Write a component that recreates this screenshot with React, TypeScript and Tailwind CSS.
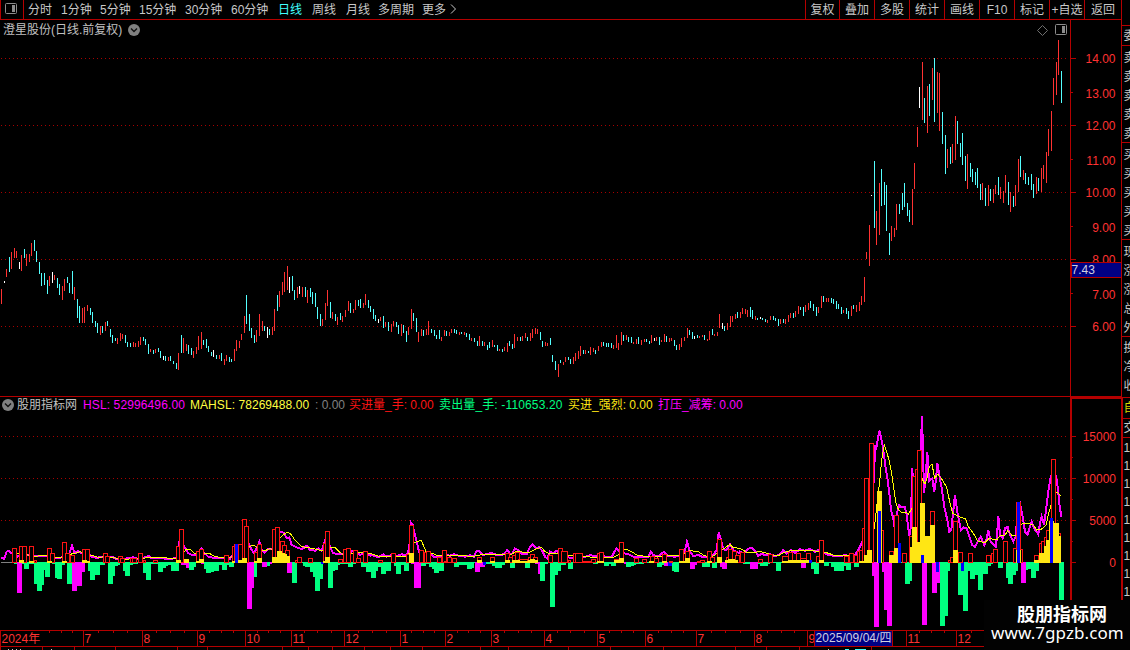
import type { ReactNode } from "react";

const FONT = "font-['Liberation_Sans','Noto_Sans_CJK_SC',sans-serif]";

const periods = [
  { label: "分时", width: "w-[33px]" },
  { label: "1分钟", width: "w-[39px]" },
  { label: "5分钟", width: "w-[39px]" },
  { label: "15分钟", width: "w-[46px]" },
  { label: "30分钟", width: "w-[46px]" },
  { label: "60分钟", width: "w-[47px]" },
  { label: "日线", width: "w-[34px]", active: true },
  { label: "周线", width: "w-[34px]" },
  { label: "月线", width: "w-[32px]" },
  { label: "多周期", width: "w-[44px]" },
  { label: "更多", width: "w-[28px]" },
];

const actions = ["复权", "叠加", "多股", "统计", "画线", "F10", "标记", "+自选", "返回"];

const legend = [
  { label: "股朋指标网", style: "w-[66px] text-[#c0c0c0]" },
  { label: "HSL: 52996496.00", style: "w-[107px] text-[#ff00ff] tracking-[0.12px]" },
  { label: "MAHSL: 78269488.00", style: "w-[125px] text-[#ffff40] tracking-[0.06px]" },
  { label: ": 0.00", style: "w-[34px] text-[#808080]" },
  { label: "买进量_手: 0.00", style: "w-[90px] text-[#ff1414]" },
  { label: "卖出量_手: -110653.20", style: "w-[129px] text-[#00ff80] tracking-[0.14px]" },
  { label: "买进_强烈: 0.00", style: "w-[90px] text-[#ffe614]" },
  { label: "打压_减筹: 0.00", style: "w-[90px] text-[#ff00ff]" },
];

// x, high, low, colour
const candles = `1 289 304 r,4 281 283 w,6 269 277 r,9 257 272 c,11 252 269 r,14 248 258 r,16 251 258 r,19 262 269 w,21 255 271 r,24 249 258 c,26 254 266 r,29 254 262 r,31 243 256 r,34 240 251 c,36 251 262 c,39 262 274 c,41 273 286 c,44 273 285 c,47 280 294 c,49 276 286 r,52 272 283 w,54 275 280 r,57 278 288 c,59 284 295 c,62 286 300 r,64 279 291 r,67 277 283 c,69 283 293 c,72 271 294 c,74 287 300 r,77 299 318 c,79 306 323 c,82 308 323 r,84 307 323 r,87 305 311 r,90 308 315 c,92 312 323 c,95 321 327 c,97 323 333 c,100 326 335 r,102 326 333 c,105 322 331 r,107 321 326 c,110 329 337 c,112 335 343 c,115 338 341 c,117 338 344 r,120 333 341 r,122 334 339 r,125 335 343 c,127 342 347 c,130 343 347 c,133 342 347 r,135 343 347 r,138 341 347 r,140 337 345 r,143 337 341 c,145 339 345 c,148 344 354 c,150 349 352 r,153 350 354 c,155 349 353 r,158 348 352 c,160 351 358 c,163 356 360 w,165 356 361 c,168 357 361 r,170 356 361 c,173 361 364 c,176 363 369 c,178 353 370 r,181 335 353 c,183 338 353 r,186 344 351 r,188 345 354 c,191 348 355 c,193 351 358 r,196 347 354 r,198 336 350 r,201 332 349 r,203 340 345 c,206 339 348 c,208 346 352 c,211 352 356 c,213 350 357 w,216 355 359 c,219 355 359 r,221 353 361 c,224 359 365 r,226 355 361 r,229 357 362 c,231 359 362 c,234 349 361 r,236 340 351 r,239 341 348 r,241 334 340 r,244 316 333 r,246 295 324 c,249 314 331 c,251 328 338 c,254 335 343 c,256 330 342 r,259 314 336 r,262 321 331 r,264 326 331 c,267 327 338 w,269 329 335 c,272 327 335 r,274 309 331 r,277 295 311 c,279 291 307 r,282 282 295 r,284 272 292 r,287 266 290 r,289 277 293 w,292 276 291 c,294 290 300 c,297 287 298 r,299 286 294 w,302 287 297 r,305 287 297 c,307 290 303 r,310 288 297 c,312 292 304 c,315 293 307 c,317 307 319 c,320 314 326 c,322 319 326 r,325 303 320 r,327 290 306 r,330 302 318 c,332 312 319 r,335 314 321 c,337 317 325 r,340 313 320 c,342 316 322 r,345 310 317 r,348 301 311 r,350 303 313 c,353 309 313 r,355 300 310 r,358 300 306 c,360 299 308 c,363 303 308 r,365 294 305 r,368 300 308 c,370 306 312 c,373 309 319 c,375 315 321 c,378 319 323 w,380 317 321 r,383 316 328 c,385 322 327 r,388 322 331 c,391 324 332 r,393 321 326 r,396 322 327 c,398 325 334 c,401 324 336 r,403 325 333 c,406 331 342 c,408 327 335 r,411 309 329 r,413 313 321 c,416 318 332 c,418 332 342 r,421 329 336 r,423 330 336 c,426 329 335 r,428 321 335 r,431 329 333 c,434 330 336 c,436 335 339 c,439 330 339 c,441 337 341 r,444 330 336 r,446 331 336 c,449 332 336 r,451 329 333 r,454 329 333 c,456 330 334 c,459 332 335 r,461 332 334 c,464 332 335 r,466 333 337 c,469 334 340 c,471 338 341 r,474 338 342 c,477 341 346 c,479 336 346 r,482 341 346 c,484 342 346 r,487 345 350 c,489 342 348 c,492 340 347 r,494 345 347 c,497 345 351 c,499 349 351 r,502 349 352 c,504 347 351 r,507 343 352 r,509 341 346 c,512 344 349 c,514 334 348 r,517 337 341 r,520 337 341 c,522 336 341 r,525 333 338 r,527 337 341 c,530 333 341 r,532 329 338 r,535 328 334 r,537 329 334 r,540 332 340 c,542 341 347 c,545 342 346 r,547 343 346 r,550 338 345 c,552 355 362 c,555 361 370 c,558 364 377 r,560 360 363 c,563 362 365 r,565 357 362 r,568 357 360 c,570 359 364 c,573 357 364 r,575 353 361 r,578 351 359 r,580 346 356 r,583 350 354 c,585 350 354 r,588 351 353 c,590 347 355 r,593 348 352 r,595 350 354 c,598 346 351 r,601 342 347 r,603 342 346 c,606 343 347 c,608 343 347 c,611 343 348 c,613 345 349 r,616 335 348 r,618 343 350 r,621 332 345 r,623 335 341 c,626 335 340 r,628 337 342 c,631 337 343 c,633 342 344 r,636 339 344 r,638 337 344 c,641 340 345 r,644 339 342 r,646 339 342 c,649 341 344 c,651 335 343 r,654 338 341 w,656 337 341 r,659 337 345 c,661 340 342 r,664 334 342 r,666 336 342 c,669 338 342 r,671 338 341 r,674 340 346 c,676 345 350 c,679 344 350 r,681 338 347 r,684 337 341 r,687 328 338 r,689 330 335 c,692 332 339 c,694 336 339 w,697 335 338 c,699 336 338 r,702 335 337 r,704 335 340 c,707 339 341 r,709 331 340 r,712 329 335 c,714 334 336 r,717 332 336 r,719 314 328 r,722 323 329 w,724 326 331 c,727 323 330 r,730 316 327 r,732 316 322 r,735 314 319 r,737 312 318 c,740 312 318 r,742 308 314 r,745 309 314 r,747 310 317 r,750 307 317 c,752 310 319 c,755 316 320 r,757 318 320 c,760 317 319 w,762 318 320 c,765 319 322 c,767 320 323 r,770 316 320 r,773 316 320 c,775 318 321 c,778 319 326 c,780 319 324 r,783 319 323 c,785 319 324 r,788 315 322 r,790 313 318 r,793 313 318 c,795 311 317 r,798 306 314 r,800 307 310 c,803 307 316 c,805 305 312 r,808 303 310 r,810 301 308 c,813 304 311 c,816 307 316 c,818 307 313 r,821 296 308 r,823 296 302 c,826 298 302 r,828 298 302 r,831 298 303 c,833 299 304 c,836 301 309 c,838 304 309 c,841 307 314 c,843 310 313 r,846 308 314 c,848 311 319 c,851 306 316 r,853 305 309 c,856 305 312 r,859 302 311 r,861 296 305 r,864 277 302 r,866 252 259 r,869 225 266 r,871 195 196 w,874 161 228 c,876 211 245 r,879 183 235 r,881 169 206 c,884 182 205 c,886 185 231 c,889 233 255 c,891 226 241 r,894 228 237 r,896 204 230 r,899 204 214 c,902 193 210 c,904 183 207 c,907 203 216 c,909 210 222 c,912 189 225 r,914 163 189 r,917 127 147 r,919 87 108 w,922 62 120 r,924 98 123 c,927 86 133 r,929 84 116 c,932 68 100 r,934 58 122 c,937 72 113 r,939 73 131 r,942 112 144 c,945 135 174 c,947 149 168 r,950 147 164 c,952 144 163 r,955 116 160 r,957 121 144 c,960 143 157 c,962 133 165 c,965 156 181 c,967 154 189 r,970 163 177 c,972 169 182 c,975 172 185 c,977 168 188 c,980 184 200 c,982 183 200 r,985 188 206 c,988 185 206 r,990 189 201 c,993 189 203 r,995 185 194 r,998 177 195 c,1000 187 199 r,1003 191 203 r,1005 175 193 r,1008 182 205 c,1010 192 212 r,1013 196 207 c,1015 185 206 r,1018 159 192 r,1020 156 177 c,1023 170 180 r,1025 173 184 c,1028 177 185 c,1031 174 190 c,1033 184 198 c,1036 177 194 r,1038 178 191 c,1041 168 192 r,1043 165 179 r,1046 152 183 r,1048 129 156 r,1051 111 151 r,1053 78 105 r,1056 62 95 r,1058 40 75 r,1061 71 103 c`
  .split(",")
  .map((row) => row.split(" "));

const candleColors: Record<string, string> = { r: "#ff3232", c: "#54ffff", w: "#ffffff" };

// Each section is stored in thirds of a pixel, relative to its own origin.
// down / up / solid / blue: start, end, level
interface Section {
  x: number;
  y: number;
  down: string;
  up: string;
  solid: string;
  blue: string;
  hsl: string;
  ma: string;
}

const sections: Section[] = [
  {
    x: 0,
    y: 500,
    down: "42 51 192 g,51 66 279 m,66 72 192 g,72 87 207 g,87 102 192 g,102 111 252 g,111 126 273 g,126 132 255 g,132 135 210 g,135 150 231 g,150 156 188 g,156 165 192 g,165 171 234 g,171 186 237 g,186 195 195 g,195 201 188 g,201 216 252 g,216 231 273 m,231 246 258 m,246 255 216 m,255 264 188 g,264 270 213 g,270 285 240 g,285 300 225 g,300 315 195 g,315 324 188 g,324 339 252 g,339 345 228 g,345 354 198 g,354 360 195 g,360 369 188 g,369 375 213 g,375 390 228 g,390 399 195 g,399 414 192 g,414 429 188 g,429 438 219 g,438 453 240 g,453 474 192 g,474 489 216 g,489 498 204 g,498 504 198 g,504 513 195 g,513 537 213 g,537 543 188 g,543 558 195 m,558 573 204 m,567 582 210 g,582 588 201 g,588 603 188 g,603 618 192 m,612 618 207 g,618 633 219 g,633 642 216 g,642 657 213 g,657 666 195 g,666 681 210 g,681 687 195 g,687 702 201 g,702 741 188 g,741 756 327 m,756 762 264 m,762 771 231 g,771 786 190 g,786 801 201 m,801 810 198 g,810 816 192 m,816 861 188 g,861 876 219 m,876 891 249 g,891 909 188 g,909 915 198 g,915 930 201 g,930 939 216 g,939 945 231 g,945 960 273 g,960 969 237 g,963 972 192 b,969 984 188 g,984 999 264 g,999 1005 213 g,1005 1014 210 g,1014 1020 195 g,1020 1044 192 g,1044 1059 201 g,1059 1068 192 g,1068 1083 188 g,1083 1098 201 g,1098 1113 216 g,1113 1128 234 g,1128 1134 213 g,1134 1140 201 g",
    up: "36 51 145,57 72 139,66 81 139,87 102 139,102 111 181,141 156 145,150 165 160,186 201 127,195 210 160,210 225 166,246 261 148,255 270 148,309 324 160,315 330 169,354 369 169,360 375 175,390 405 175,396 411 175,414 429 160,429 438 181,459 474 181,528 543 139,537 552 88,588 603 154,597 612 148,672 687 166,696 711 139,702 717 133,714 729 133,726 741 58,732 747 79,762 777 157,771 786 133,816 831 88,825 840 82,840 855 124,846 861 136,855 870 151,885 900 181,891 906 172,924 939 175,969 984 130,975 990 94,1014 1029 178,1029 1044 148,1038 1053 145,1059 1074 151,1068 1083 175,1089 1104 154,1134 1149 181",
    solid: "57 72 180,87 102 183,141 156 183,186 201 183,246 261 180,261 270 183,528 543 180,552 567 177,588 600 183,597 612 177,696 705 183,714 727 180,726 741 174,762 771 183,771 786 174,816 831 171,831 846 153,846 855 159,855 861 162,861 870 168,969 975 183,975 990 171",
    blue: "705 714 133",
    hsl: "4,175 12,176 20,155 26,152 32,158 42,163 52,170 60,165 80,165 102,167 120,168 140,168 150,172 170,175 185,172 200,168 208,160 216,137 222,155 228,158 234,154 245,160 262,155 275,170 290,174 305,170 320,175 335,170 350,177 375,176 400,172 420,178 435,172 446,167 455,175 480,173 500,177 525,175 533,170 540,110 548,130 556,145 565,160 578,166 590,165 604,145 612,158 625,170 645,175 665,173 690,176 698,165 715,145 725,140 735,120 745,130 755,150 762,160 770,145 778,125 785,150 793,158 805,147 820,148 830,100 840,96 852,98 860,115 868,112 875,135 890,142 905,148 920,137 930,150 945,152 955,145 965,152 972,130 980,110 990,140 998,158 1010,163 1030,162 1045,160 1060,152 1080,165 1095,158 1110,166",
    ma: "50,160 85,165 110,170 120,166 140,166 165,172 185,172 210,163 225,160 240,155 250,160 270,165 295,172 320,170 350,175 380,178 410,174 425,178 440,172 470,172 500,174 530,176 548,160 558,149 573,149 585,162 600,160 628,160 645,170 665,172 690,172 710,165 735,145 750,139 762,136 775,148 795,152 808,146 825,150 840,115 850,105 860,97 870,100 885,120 905,140 935,145 965,152 985,141 1005,143 1018,155 1030,165 1050,160 1080,158 1110,160",
  },
  {
    x: 370,
    y: 500,
    down: "0 3 216 g,3 18 234 g,18 24 207 g,24 33 201 g,33 48 222 g,48 63 213 g,63 72 188 g,72 78 198 g,78 93 222 g,93 102 195 g,102 117 213 g,117 123 188 g,123 132 192 m,132 153 264 m,153 168 198 g,168 177 192 g,177 186 201 g,186 192 207 g,192 207 219 g,207 222 213 g,222 252 188 g,252 267 201 g,267 291 195 g,291 306 207 g,306 312 204 g,312 315 188 g,315 330 216 m,330 345 201 m,339 348 195 b,348 366 194 g,366 375 198 g,375 396 204 g,396 405 195 g,405 420 189 g,420 435 204 g,435 465 188 g,465 480 204 g,480 495 189 g,495 504 192 m,504 519 222 m,510 525 243 g,525 534 192 g,534 540 189 g,540 555 321 g,555 564 225 g,564 573 213 g,573 588 195 g,588 594 189 g,594 609 207 g,609 669 189 g,669 684 192 g,684 702 189 g,702 717 198 g,717 723 192 g,723 738 198 g,738 762 188 g,762 777 192 m,768 783 201 g,783 792 198 g,792 798 195 g,798 822 192 g,822 861 188 g,861 876 201 g,876 882 195 g,882 894 198 m,894 906 198 b,906 912 213 g,912 927 216 g,927 960 188 g,960 975 207 m,975 981 195 m,981 996 188 g,996 1020 201 g,1020 1026 189 g,1026 1041 204 g,1041 1050 188 g,1050 1056 201 m,1056 1071 207 m,1071 1119 188 g,1119 1134 192 g",
    up: "24 39 181,63 78 160,108 123 163,117 132 76,147 162 151,162 177 157,168 183 154,201 216 172,216 231 151,222 255 183,231 246 172,246 261 175,321 336 172,360 375 172,405 420 160,414 429 172,426 441 166,435 450 157,444 475 178,474 489 172,480 495 163,489 504 172,534 549 166,564 579 145,573 594 154,594 603 181,609 624 160,615 639 160,639 665 183,663 678 178,681 696 160,687 702 157,732 747 178,747 762 127,792 807 175,816 831 178,840 855 169,852 867 175,876 891 163,897 910 183,927 942 148,945 960 154,981 1000 183,990 1005 181,1011 1026 154,1020 1035 172,1041 1056 118,1068 1083 172,1074 1089 148,1086 1101 154,1095 1110 166,1110 1125 157",
    solid: "117 132 159,321 336 180,360 375 183,405 420 180,426 450 180,450 474 183,474 504 180,480 495 177,681 702 183,732 747 180,747 762 174,837 852 183,876 891 183,927 945 183,945 960 174,1011 1026 183,1041 1056 171,1065 1074 180,1074 1095 177,1095 1104 180",
    blue: "",
    hsl: "0,163 15,168 25,172 40,163 50,170 65,165 80,168 95,163 105,166 113,160 118,140 123,68 128,75 133,98 140,125 147,155 155,165 165,160 180,162 195,172 210,168 225,165 240,167 252,163 270,168 285,170 300,166 312,170 318,155 326,152 340,165 352,162 364,158 380,165 395,165 405,158 412,150 420,162 428,160 434,145 445,150 455,163 470,162 478,145 487,134 498,145 508,142 518,155 525,170 532,176 540,155 550,160 560,152 575,165 590,170 605,175 625,168 640,172 660,166 680,168 695,166 710,172 725,172 733,155 740,145 748,155 760,160 775,162 790,170 805,172 820,170 835,172 842,155 850,165 862,170 870,165 882,155 895,168 915,170 935,165 945,150 951,125 958,150 970,168 985,165 1000,172 1020,172 1030,165 1040,150 1046,98 1052,115 1058,140 1065,150 1072,148 1080,132 1090,150 1105,158 1111,158",
    ma: "0,160 25,168 50,170 80,170 110,170 122,150 133,128 147,123 153,121 160,135 168,155 185,160 205,167 240,168 270,167 310,169 340,163 380,163 400,163 425,163 440,153 460,157 480,156 495,148 515,142 525,155 540,162 560,160 575,165 600,165 640,170 680,172 725,174 745,165 755,150 770,148 785,155 800,165 830,170 860,170 900,166 930,168 945,160 960,152 985,155 1000,165 1020,172 1035,165 1055,150 1070,140 1080,133 1090,143 1111,145",
  },
  {
    x: 740,
    y: 400,
    down: "0 10 489 g,10 30 492 g,30 54 507 m,54 60 492 g,60 84 498 g,84 90 492 g,90 108 489 g,108 123 513 g,123 183 489 g,183 198 504 m,198 213 489 g,213 222 507 g,222 237 522 g,237 252 489 g,252 267 498 g,267 273 489 g,273 282 501 g,282 312 513 g,312 318 498 g,318 333 510 g,333 342 489 g,342 357 501 g,357 396 489 g,396 402 528 m,402 417 681 m,417 426 489 g,426 432 516 m,432 441 630 m,441 456 678 m,456 495 489 g,495 510 552 g,510 516 543 g,516 546 489 g,546 561 675 m,561 576 489 g,576 591 579 m,591 606 549 m,588 597 516 b,600 615 678 g,615 624 648 g,624 630 513 g,630 654 489 g,654 669 585 g,669 684 633 g,663 672 513 b,684 690 513 g,690 705 537 g,705 714 525 g,714 729 570 g,729 744 522 g,744 753 498 g,753 759 492 g,759 774 489 g,774 789 504 g,789 798 489 g,798 804 534 g,804 819 552 g,819 828 525 g,828 834 513 g,834 843 489 g,843 858 549 m,858 864 510 g,864 873 507 g,873 888 534 g,888 897 513 g,897 957 489 g,957 972 600 g",
    up: "0 15 458,54 69 477,84 99 462,126 160 470,144 159 456,168 183 460,180 213 475,198 213 460,230 245 468,237 252 421,312 327 470,327 342 460,342 357 465,351 366 455,357 372 450,366 381 385,381 396 400,372 387 235,387 402 130,418 432 391,447 462 453,462 477 346,486 501 460,508 523 408,516 531 229,525 540 208,531 546 151,558 573 408,570 585 334,624 640 480,630 645 471,639 654 364,654 669 456,684 699 460,738 753 466,753 768 460,759 774 448,789 804 424,819 834 445,828 843 307,834 849 448,882 897 466,897 912 430,903 918 424,912 927 412,918 933 391,933 948 178,948 963 400",
    solid: "126 150 483,144 183 480,183 207 482,237 252 480,357 372 485,372 381 465,381 396 450,411 426 273,447 462 465,462 474 444,511 517 441,516 531 381,531 540 426,540 555 309,555 570 408,570 585 375,639 654 450,828 843 450,882 897 480,897 912 459,912 918 438,918 927 420,927 942 363,942 957 369,957 963 408",
    blue: "414 423 333,474 483 430,543 552 465,831 840 307,930 939 354,207 216 480",
    hsl: "0,455 12,460 22,448 34,443 45,452 54,467 65,462 75,465 90,463 105,468 118,465 130,450 140,460 152,450 165,458 180,448 195,452 210,447 225,455 235,450 250,458 265,465 280,467 295,468 315,466 330,468 345,465 355,450 365,430 375,410 385,330 395,260 403,245 404,135 408,150 415,110 418,92 424,115 430,150 437,205 443,240 448,280 453,330 460,355 463,380 468,350 478,315 485,322 494,320 500,345 508,408 513,380 516,205 522,260 530,300 540,210 546,48 549,150 552,280 557,230 562,155 567,243 577,235 583,275 588,240 592,190 597,220 605,265 613,320 622,360 628,395 634,390 639,340 645,285 652,335 658,365 663,390 670,382 680,385 688,410 697,435 705,440 713,425 722,410 733,435 740,415 745,390 752,425 762,435 767,440 771,410 775,347 780,405 788,415 795,385 803,380 810,405 820,425 827,410 833,330 840,310 848,350 855,395 863,403 870,380 875,365 882,385 890,395 895,403 900,370 905,350 912,375 918,330 925,275 933,225 940,250 948,225 954,270 958,310 964,350",
    ma: "0,445 20,457 40,458 60,454 80,460 100,466 115,467 130,458 150,452 180,450 215,450 240,457 260,458 280,465 300,467 350,467 380,450 403,385 410,320 418,255 425,180 433,135 440,155 447,180 455,220 462,270 468,310 475,328 485,338 495,336 505,342 515,328 530,280 540,220 548,240 555,253 562,230 568,200 576,193 584,235 593,223 605,237 620,262 630,310 638,340 655,348 665,353 677,357 685,380 700,400 713,423 735,428 748,415 770,420 780,407 795,405 803,392 815,405 830,405 838,378 850,370 865,370 880,375 890,390 905,387 918,375 925,345 933,315 948,277 955,280 962,288",
  },
];

const ZERO_Y = 562;
const fills: Record<string, string> = { g: "#00ff80", m: "#ff00ff", b: "#0000ff" };

const toRows = (data: string) => (data ? data.split(",").map((row) => row.split(" ")) : []);
const px = (origin: number, value: string | number) => origin + Math.round(Number(value) / 3 - 0.2);

function linePoints(key: "hsl" | "ma") {
  return sections
    .flatMap((s) =>
      s[key].split(" ").map((pair) => {
        const [x, y] = pair.split(",").map(Number);
        return `${(s.x + x / 3).toFixed(1)},${(s.y + y / 3).toFixed(1)}`;
      })
    )
    .join(" ");
}

const priceLabels: [string, number, number][] = [
  ["14.00", 58, 63],
  ["13.00", 92, 98],
  ["12.00", 125, 130],
  ["11.00", 159, 165],
  ["10.00", 192, 197],
  ["9.00", 226, 232],
  ["8.00", 259, 264],
  ["7.00", 293, 299],
  ["6.00", 326, 331],
];

const volumeLabels: [string, number][] = [
  ["15000", 436],
  ["10000", 478],
  ["5000", 520],
  ["0", 562],
];

const months: [string, number][] = [
  ["7", 83],
  ["8", 142],
  ["9", 197],
  ["10", 245],
  ["11", 291],
  ["12", 344],
  ["1", 400],
  ["2", 445],
  ["3", 491],
  ["4", 544],
  ["5", 597],
  ["6", 645],
  ["7", 696],
  ["8", 754],
  ["9", 807],
  ["11", 906],
  ["12", 956],
];

const minorTicks = [49, 61, 72, 98, 113, 127, 156, 170, 184, 209, 221, 233, 257, 268, 280, 304, 317, 331, 358, 372, 386, 411, 423, 434, 457, 468, 480, 504, 518, 531, 557, 570, 584, 609, 621, 633, 658, 671, 683, 711, 725, 740, 767, 781, 794, 919, 931, 944, 971];
const footTicks = [0, 42, 74, 115, 177, 207, 282, 308, 332, 364, 390, 422, 480, 508, 568, 610, 663, 735, 766, 799, 871];

const RED = "#b40000";

// y centre of each row cut off by the right edge of the window
const sideRows: [string, number][] = [
  ["委", 35],
  ["卖", 57],
  ["卖", 76],
  ["卖", 95],
  ["卖", 114],
  ["卖", 133],
  ["买", 154],
  ["买", 173],
  ["买", 192],
  ["买", 211],
  ["买", 230],
  ["现", 251],
  ["涨", 270],
  ["涨", 289],
  ["总", 308],
  ["外", 327],
  ["换", 347],
  ["净", 366],
  ["收", 385],
  ["自", 407],
  ["交", 427],
  ["1", 447],
  ["1", 465],
  ["1", 483],
  ["1", 501],
  ["1", 519],
  ["1", 537],
  ["1", 555],
  ["1", 573],
  ["1", 591],
];

function PanelIcon() {
  return (
    <svg width="13" height="12" viewBox="0 0 13 12">
      <rect x="0.5" y="0.5" width="11" height="10" rx="1" fill="none" stroke="#8c8c8c" />
      <rect x="7" y="2" width="3" height="7" fill="#8c8c8c" />
    </svg>
  );
}

function ChevronBadge() {
  return (
    <svg width="12" height="12" viewBox="0 0 12 12" className="shrink-0">
      <circle cx="6" cy="6" r="6" fill="#808080" />
      <path d="M3 4.5 L6 7.5 L9 4.5" fill="none" stroke="#101010" strokeWidth="1.4" />
    </svg>
  );
}

function Toolbar() {
  return (
    <header className="flex h-5 w-[1122px] shrink-0 border-r border-b border-[#b40000] text-xs leading-5 text-[#c8c8c8]">
      <div className="flex w-6 shrink-0 items-start border-x border-[#b40000] pt-[3px] pl-1">
        <PanelIcon />
      </div>
      <nav className="flex pl-1 whitespace-nowrap">
        {periods.map((p) => (
          <span key={p.label} className={`${p.width} ${p.active ? "text-[#40ffff]" : ""}`}>
            {p.label}
          </span>
        ))}
        <svg width="7" height="10" viewBox="0 0 7 10" className="mt-1">
          <path d="M1 0.5 L5.5 5 L1 9.5" fill="none" stroke="#c8c8c8" />
        </svg>
      </nav>
      <div className="ml-auto flex">
        {actions.map((a) => (
          <span
            key={a}
            className="w-[35px] border-l border-[#b40000] text-center whitespace-nowrap first:w-[34px] last:w-[37px]"
          >
            {a}
          </span>
        ))}
      </div>
    </header>
  );
}

function VolumePane() {
  return (
    <g>
      <path d="M1 562.5H14" stroke="#808080" />
      {sections.map((s) =>
        toRows(s.down).map(([a, b, level, kind], i) => (
          <rect
            key={`${s.x}-${i}`}
            x={px(s.x, a)}
            y={ZERO_Y}
            width={px(s.x, b) - px(s.x, a)}
            height={Math.max(1, px(s.y, level) - ZERO_Y)}
            fill={fills[kind]}
          />
        ))
      )}
      <polyline points={linePoints("hsl")} fill="none" stroke="#ff00ff" strokeWidth="2" />
      <polyline points={linePoints("ma")} fill="none" stroke="#ffff00" strokeWidth="1" />
      {sections.map((s) => (
        <g key={s.x}>
          {toRows(s.up).map(([a, b, level], i) => (
            <rect
              key={i}
              x={px(s.x, a) + 0.5}
              y={px(s.y, level) + 0.5}
              width={px(s.x, b) - px(s.x, a) - 1}
              height={Math.max(0, ZERO_Y - px(s.y, level))}
              fill="#000"
              stroke="#ff1414"
            />
          ))}
          {toRows(s.solid).map(([a, b, level], i) => (
            <rect
              key={i}
              x={px(s.x, a)}
              y={px(s.y, level)}
              width={px(s.x, b) - px(s.x, a)}
              height={ZERO_Y + 1 - px(s.y, level)}
              fill="#ffe614"
            />
          ))}
          {toRows(s.blue).map(([a, b, level], i) => (
            <rect
              key={i}
              x={px(s.x, a)}
              y={px(s.y, level)}
              width={px(s.x, b) - px(s.x, a)}
              height={ZERO_Y + 1 - px(s.y, level)}
              fill="#0000ff"
            />
          ))}
        </g>
      ))}
    </g>
  );
}

function AxisText({ x, y, end, children }: { x: number; y: number; end?: boolean; children: ReactNode }) {
  return (
    <text x={x} y={y} fontSize="12" fill="#ff3232" textAnchor={end ? "end" : "start"}>
      {children}
    </text>
  );
}

function Chart() {
  return (
    <svg width="1121" height="630" viewBox="0 20 1121 630" className="block" shapeRendering="crispEdges">
      {/* dotted grid */}
      {[58, 125, 192, 259, 326, 436, 478, 520].map((y) => (
        <path key={y} d={`M1 ${y + 0.5}H1067`} stroke="#a80000" strokeDasharray="1 3" />
      ))}

      {candles.map(([x, high, low, color]) => (
        <rect key={x} x={x} y={high} width="1" height={Number(low) - Number(high)} fill={candleColors[color]} />
      ))}
      <VolumePane />

      {/* price axis */}
      <path d="M1070.5 20V397M0 396.5H1121" stroke={RED} />
      <path d="M1071 630V398H1121" stroke={RED} strokeWidth="2" fill="none" />
      {priceLabels.map(([label, tick, y], i) => (
        <g key={label}>
          <path d={`M1071 ${tick + 0.5}h${i % 2 ? 2 : 5}`} stroke={RED} />
          <AxisText x={1115.5} y={y} end>
            {label}
          </AxisText>
        </g>
      ))}
      <rect x="1071" y="262.5" width="50" height="15" fill="#000084" stroke={RED} />
      <text x="1071.5" y="274" fontSize="12" fill="#d0d0e0">
        7.43
      </text>
      {volumeLabels.map(([label, tick]) => (
        <g key={label}>
          <path d={`M1072 ${tick + 0.5}h4`} stroke={RED} />
          <AxisText x={1116} y={tick + 5} end>
            {label}
          </AxisText>
        </g>
      ))}
      <path d="M1072 457.5h1M1072 499.5h1M1072 541.5h1" stroke={RED} />

      {/* date axis */}
      <path d="M0 630.5H1121M0 646.5H1121M0.5 630V650" stroke={RED} />
      <AxisText x={1.5} y={643}>
        2024年
      </AxisText>
      {months.map(([label, x]) => (
        <g key={x}>
          <path d={`M${x + 0.5} 630V646`} stroke={RED} />
          <AxisText x={x + 1.5} y={643}>
            {label}
          </AxisText>
        </g>
      ))}
      {minorTicks.map((x) => (
        <path key={x} d={`M${x + 0.5} 631v2`} stroke={RED} />
      ))}
      {footTicks.map((x) => (
        <path key={x} d={`M${x + 0.5} 647v3`} stroke={RED} />
      ))}
      <rect x="814.5" y="630.5" width="78" height="16" fill="#000084" stroke={RED} />
      <text x="815.5" y="642" fontSize="12" fill="#d0d0e0" textLength="76">
        2025/09/04/四
      </text>
      <path d="M8 649.5h1M12 649.5h1M16 649.5h1M20 649.5h1M51 649.5h1M828 649.5h1" stroke="#c8c8c8" />
      <path d="M845 649.5h4M855 649.5h11" stroke="#40ffff" />
    </svg>
  );
}

function SideStrip() {
  return (
    <svg width="9" height="630" viewBox="1121 20 9 630" className="block">
      <path d="M1121.5 20V650" stroke={RED} />
      <path d="M1122 397V600" stroke={RED} strokeWidth="2" />
      {[25, 45, 142, 239, 336, 397, 418, 437].map((y) => (
        <path key={y} d={`M1121 ${y + 0.5}H1130`} stroke={RED} />
      ))}
      {sideRows.map(([label, y]) => (
        <text key={y} x="1123.5" y={y + 4.5} fontSize="12" fill={label === "自" ? "#d8d800" : "#c8c8c8"}>
          {label}
        </text>
      ))}
    </svg>
  );
}

export default function App() {
  return (
    <div className={`relative flex h-[650px] w-[1130px] flex-col overflow-hidden bg-black ${FONT}`}>
      <Toolbar />
      <main className="relative flex">
        <Chart />
        <SideStrip />

        {/* pane captions float above the plots */}
        <div className="absolute top-0.5 left-[3px] flex h-4 items-center gap-[5px] text-xs whitespace-nowrap text-[#c0c0c0]">
          <span className="w-[120px]">澄星股份(日线.前复权)</span>
          <ChevronBadge />
        </div>
        <div className="absolute top-1 right-[62px] flex items-center gap-[7px]">
          <svg width="11" height="11" viewBox="0 0 11 11">
            <path d="M5.5 0.5 L10.5 5.5 L5.5 10.5 L0.5 5.5Z" fill="none" stroke="#707070" />
          </svg>
          <PanelIcon />
        </div>
        <div className="absolute top-[377px] left-0.5 flex h-4 items-center text-xs whitespace-nowrap">
          <ChevronBadge />
          <div className="ml-[3px] flex">
            {legend.map((l) => (
              <span key={l.label} className={l.style}>
                {l.label}
              </span>
            ))}
          </div>
        </div>
      </main>

      <div className="absolute right-0 bottom-0 flex h-[50px] w-[146px] flex-col bg-[#020202] pt-1 text-white">
        <span className="pl-[33px] text-[18px] leading-[23px] font-bold">股朋指标网</span>
        <span className="pl-[7px] font-['Noto_Sans'] text-[17px] leading-[12px] tracking-[0.08px] whitespace-nowrap">
          www.7gpzb.com
        </span>
      </div>
    </div>
  );
}
